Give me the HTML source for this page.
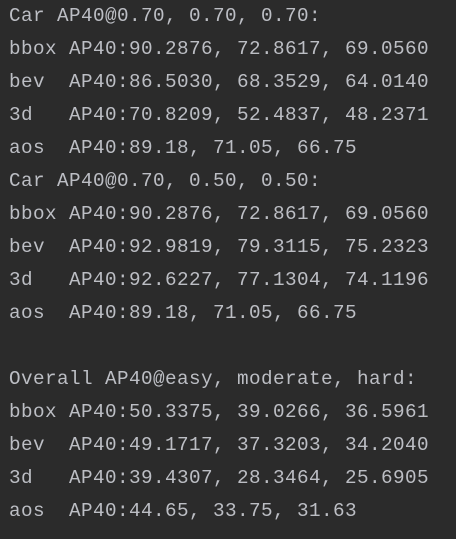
<!DOCTYPE html>
<html><head><style>
html,body{margin:0;padding:0;background:#2b2b2b;width:456px;height:539px;overflow:hidden}
pre{margin:0;padding:0 0 0 9px;font-family:"Liberation Mono",monospace;font-size:19.3px;letter-spacing:0.43px;line-height:33px;color:#bcbec4}
</style></head><body><pre>Car AP40@0.70, 0.70, 0.70:
bbox AP40:90.2876, 72.8617, 69.0560
bev  AP40:86.5030, 68.3529, 64.0140
3d   AP40:70.8209, 52.4837, 48.2371
aos  AP40:89.18, 71.05, 66.75
Car AP40@0.70, 0.50, 0.50:
bbox AP40:90.2876, 72.8617, 69.0560
bev  AP40:92.9819, 79.3115, 75.2323
3d   AP40:92.6227, 77.1304, 74.1196
aos  AP40:89.18, 71.05, 66.75

Overall AP40@easy, moderate, hard:
bbox AP40:50.3375, 39.0266, 36.5961
bev  AP40:49.1717, 37.3203, 34.2040
3d   AP40:39.4307, 28.3464, 25.6905
aos  AP40:44.65, 33.75, 31.63</pre></body></html>
